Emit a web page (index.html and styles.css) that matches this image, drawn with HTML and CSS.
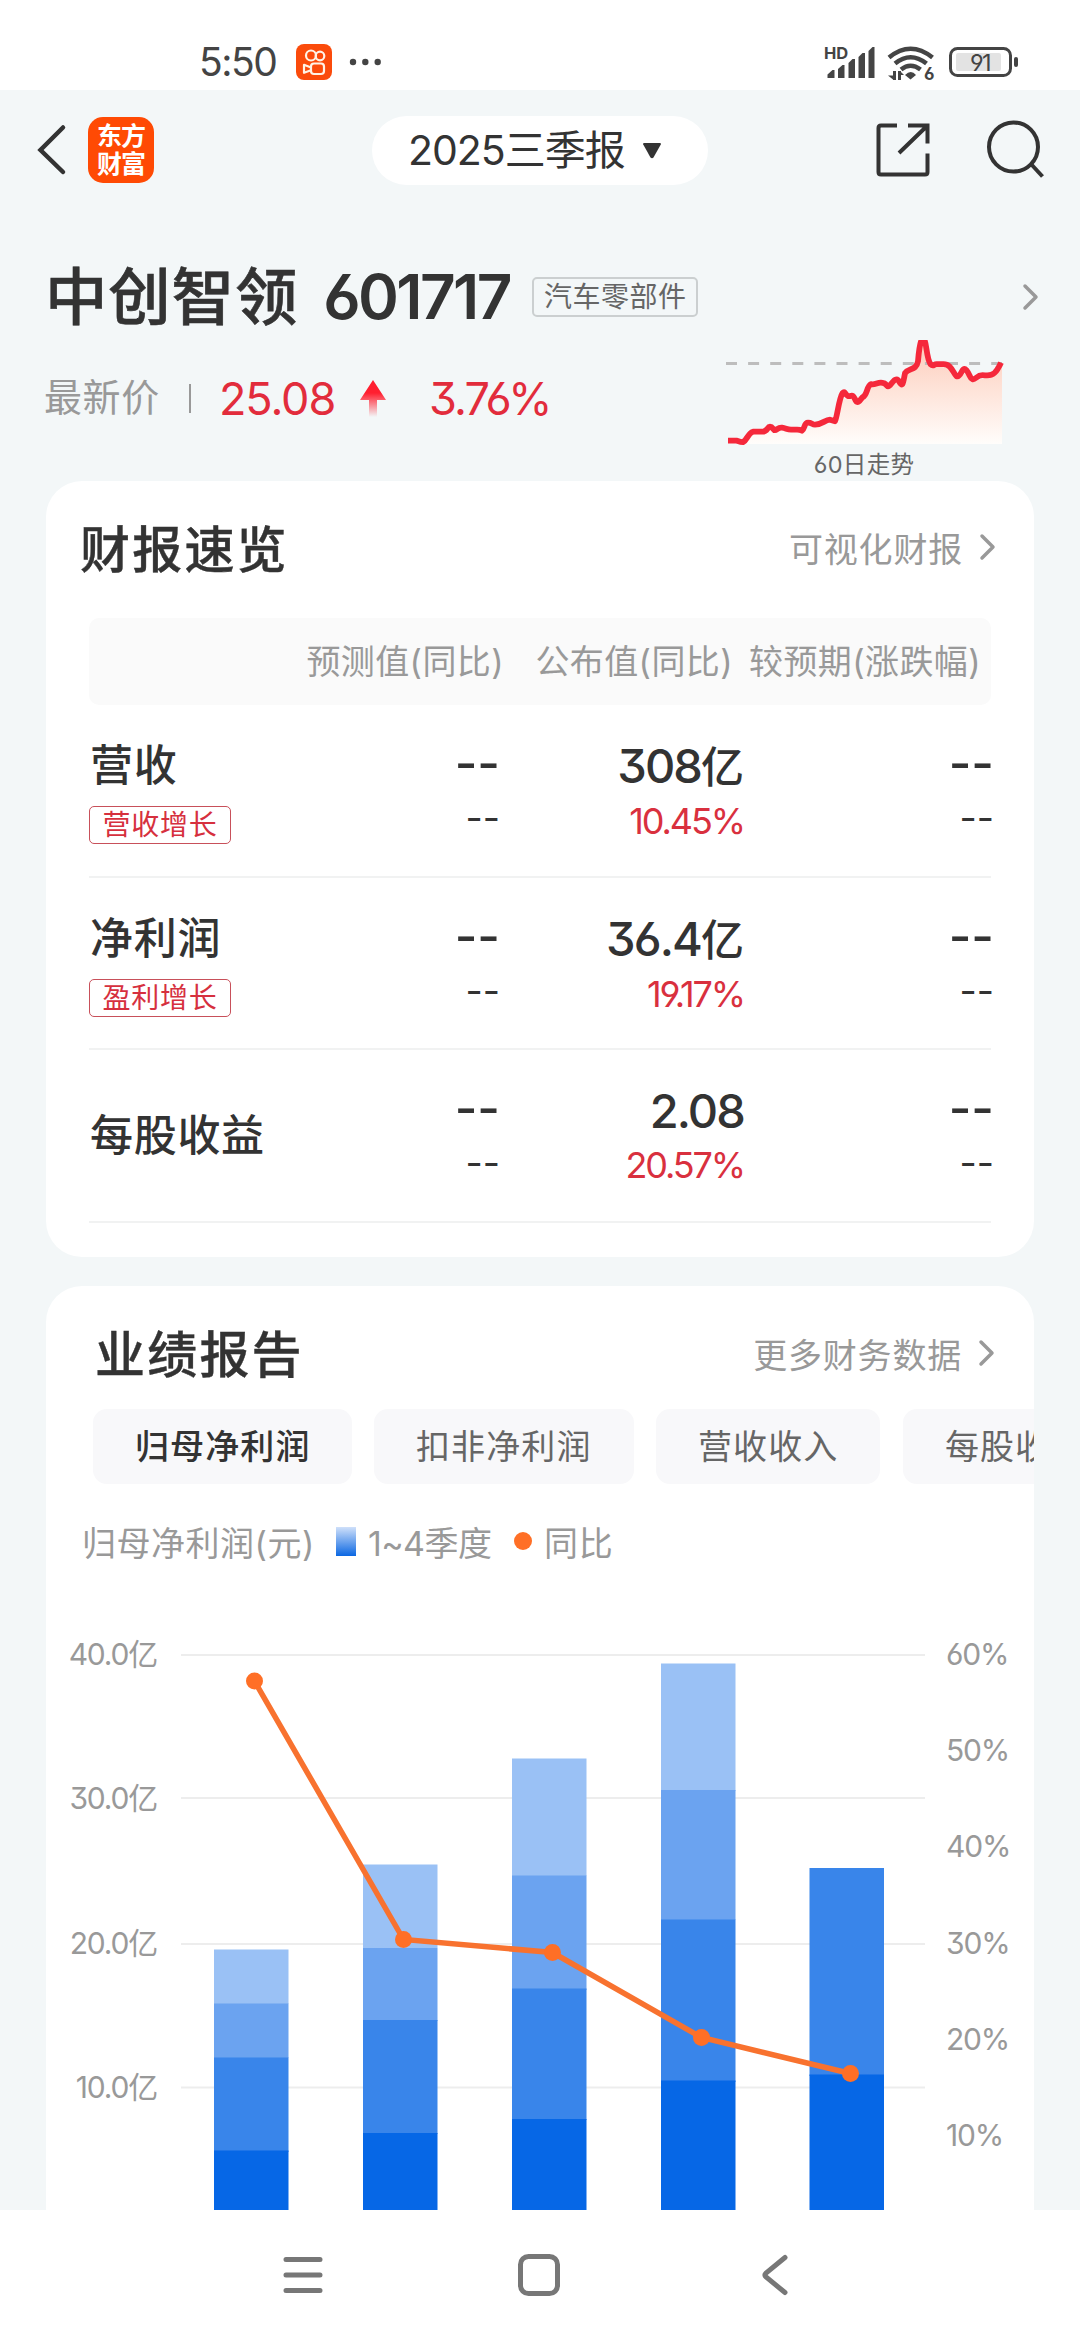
FILE: index.html
```html
<!DOCTYPE html>
<html lang="zh-CN">
<head>
<meta charset="utf-8">
<title>中创智领 601717</title>
<link rel="stylesheet" href="styles.css">
</head>
<body>
<div class="phone">
  <header class="status">
    <div class="status-left">
      <span class="clock">5:50</span>
      <svg class="app-badge" width="36" height="36" viewBox="0 0 36 36">
        <rect width="36" height="36" rx="8" fill="#fb4b0b"/>
        <g fill="none" stroke="#fff3e6" stroke-width="2.2">
          <circle cx="15" cy="11.5" r="5"/><circle cx="24" cy="12" r="4.3"/>
          <rect x="15" y="19.5" width="13" height="10.5" rx="3"/><path d="M15 23.5L8 20.8v8l7-2.6" stroke-linejoin="round"/>
        </g>
      </svg>
      <svg width="32" height="8" viewBox="0 0 32 8" fill="#444"><circle cx="4" cy="4" r="3.2"/><circle cx="16.3" cy="4" r="3.2"/><circle cx="28.7" cy="4" r="3.2"/></svg>
    </div>
    <svg class="status-right" width="196" height="40" viewBox="824 42 196 40">
      <text x="824" y="58.5" class="hd">HD</text>
      <g fill="#444">
        <path d="M827.5 78v-3.500l5-4.500h2v8z"/><path d="M838 78v-9l4.500-4h2v13z"/><path d="M848.500 78v-15l4-4h2.500v19z"/><path d="M858.500 78v-21l4-4h2.500v25z"/><path d="M868.500 78v-27l4-4h2v31z"/>
        <path d="M905 75q6-6 11 0l-5.500 4.500z"/>
        <path d="M888 75.500h5v4zM893 71h3v9h-3zM898 71h3v9h-3zM900 71l4 4h-4z"/>
        <rect x="1014" y="57" width="4" height="10" rx="2"/>
      </g>
      <g fill="none" stroke="#444" stroke-width="4.600">
        <path d="M889 57.500q21.500-17.500 43.500 0"/><path d="M895 63.500q15.500-12.500 31.500 0"/><path d="M901 69.500q9.500-7.500 19.500 0"/>
      </g>
      <text x="924" y="79.500" class="wifi-gen">6</text>
      <rect x="956" y="53" width="45" height="18" rx="2" fill="#e3e3e3"/>
      <rect x="950.500" y="48.500" width="60" height="27" rx="7" fill="none" stroke="#444" stroke-width="3"/>
      <text x="980" y="71" class="battery" text-anchor="middle">91</text>
    </svg>
  </header>

  <main class="app">
    <nav class="topbar">
      <svg width="30" height="52" viewBox="0 0 30 52" fill="none" stroke="#333" stroke-width="4.500" stroke-linecap="round"><path d="M26 3.500L3.500 26 26 48"/></svg>
      <div class="logo"><span>东方</span><span>财富</span></div>
      <div class="period"><span>2025三季报</span>
        <svg width="20" height="17" viewBox="0 0 20 17"><path d="M2 1h16q1.500 0 .8 1.500l-7.300 13q-1.500 1.500-3 0l-7.300-13Q.5 1 2 1z" fill="#333"/></svg>
      </div>
      <div class="actions">
        <svg width="54" height="54" viewBox="0 0 54 54" fill="none" stroke="#333" stroke-width="4"><path d="M21 2.500H5q-2.500 0-2.500 2.500v44q0 2.500 2.500 2.500h44q2.500 0 2.500-2.500V30.500M32 2.500h19.500v18M51 3L23 30"/></svg>
        <svg width="60" height="60" viewBox="0 0 60 60" fill="none" stroke="#333" stroke-width="4"><circle cx="27.500" cy="27" r="24.500"/><path d="M45 44l11.500 12.500"/></svg>
      </div>
    </nav>

    <section class="quote">
      <div class="quote-name">
        <h1>中创智领</h1><span class="code">601717</span><span class="sector">汽车零部件</span>
        <svg class="go" width="18" height="28" viewBox="0 0 18 28"><path d="M3 3l11 11L3 25"/></svg>
      </div>
      <div class="quote-row">
        <div class="price">
          <span class="price-label">最新价</span><i class="bar"></i><span class="up last">25.08</span>
          <svg class="arrow" width="26" height="37" viewBox="0 0 26 37"><defs><linearGradient id="a" x1="0" y1="0" x2="0" y2="1"><stop offset=".35" stop-color="#ff1f30"/><stop offset="1" stop-color="#ff1f30" stop-opacity="0"/></linearGradient></defs><path d="M13 0l13 20h-9v17H9V20H0z" fill="url(#a)"/></svg>
          <span class="up pct">3.76%</span>
        </div>
        <div class="trend">
          <svg width="284" height="106" viewBox="722 340 284 106">
            <defs><linearGradient id="t" x1="0" y1="0" x2="0" y2="1"><stop offset="0" stop-color="#fdcbb9"/><stop offset="1" stop-color="#fffdfb"/></linearGradient></defs>
            <path fill="url(#t)" d="M745 444L752 432 780 427 805 430 835 423 840 400 852 397 868 396 872 384 900 382 910 370 918 360 924 340 932 366 950 368 960 378 967 371 975 381 995 375 1002 363V444z"/>
            <path d="M726 363.500h276" stroke="#bdbdbd" stroke-width="3" stroke-dasharray="11 11.100"/>
            <path fill="none" stroke="#f5283b" stroke-width="5.800" stroke-linejoin="round" d="M728 440.700h9q4 1.500 6 1.500c4-2 5-9 10-10.500h9c6 0 5-5 8-5s3 3.500 5 3.500 3-3 7-2.500 5 2 9 2h6q3 0 5 1c3-2 2-8 6-8s4 2 7 2c7 0 10-5 15-5l5 1.500c2-3 4-23 7.500-28 3-3.500 3 3.500 7 3 4-1.500 4 0 6 4s4 1 7-3c5-2 4-11 8.500-13 5 1 7-3 13-1 4 2 3 5 6 2 4-5 7-8 9-4 4 7 4 2 6-8 4-6 11-2 13-12 1-12 2-18 3.500-21h3c2 3 2 18 6 24 3 3 3 0 6 0h7c8 0 9 8 13 12 5 2 5-11 10-6 4 5 3 8 6 9s4-4 10-4c5 0 10 2 15-6q2-3 3.500-6.500"/>
          </svg>
          <span class="trend-label">60日走势</span>
        </div>
      </div>
    </section>

    <section class="card overview">
      <div class="card-head">
        <h2>财报速览</h2>
        <div class="more"><span>可视化财报</span><svg class="go" width="18" height="28" viewBox="0 0 18 28"><path d="M3 3l11 11L3 25"/></svg></div>
      </div>
      <div class="cols"><span>预测值(同比)</span><span>公布值(同比)</span><span>较预期(涨跌幅)</span></div>
      <div class="row">
        <div class="metric"><b>营收</b><em>营收增长</em></div>
        <div class="val none"><b>--</b><span>--</span></div>
        <div class="val"><b class="num">308<i>亿</i></b><span class="red">10.45%</span></div>
        <div class="val none"><b>--</b><span>--</span></div>
      </div>
      <div class="row">
        <div class="metric"><b>净利润</b><em>盈利增长</em></div>
        <div class="val none"><b>--</b><span>--</span></div>
        <div class="val"><b class="num">36.4<i>亿</i></b><span class="red">19.17%</span></div>
        <div class="val none"><b>--</b><span>--</span></div>
      </div>
      <div class="row">
        <div class="metric single"><b>每股收益</b></div>
        <div class="val none"><b>--</b><span>--</span></div>
        <div class="val"><b class="num">2.08</b><span class="red">20.57%</span></div>
        <div class="val none"><b>--</b><span>--</span></div>
      </div>
    </section>

    <section class="card report">
      <div class="card-head">
        <h2>业绩报告</h2>
        <div class="more"><span>更多财务数据</span><svg class="go" width="18" height="28" viewBox="0 0 18 28"><path d="M3 3l11 11L3 25"/></svg></div>
      </div>
      <div class="tabs">
        <span class="tab active">归母净利润</span><span class="tab">扣非净利润</span><span class="tab">营收收入</span><span class="tab">每股收益</span>
      </div>
      <div class="legend">
        <span class="unit">归母净利润(元)</span><i class="swatch"></i><span class="quarters">1~4季度</span><i class="dot"></i><span>同比</span>
      </div>
      <svg class="chart" width="988" height="630" viewBox="46 1580 988 630">
        <g stroke="#ededed" stroke-width="2"><path d="M181 1655h744M181 1798h744M181 1944h744M181 2087.500h744"/></g>
        <g fill="#9ac1f5">
          <path d="M214 1949.500h74.500V2004H214zM363 1864.500h74.500V1948H363zM512 1758.500h74.500V1876H512zM661 1663.500h74.500V1791H661z"/>
        </g>
        <g fill="#6ba3f0">
          <path d="M214 2003.500h74.500V2058H214zM363 1948h74.500v73H363zM512 1875.500h74.500V1990H512zM661 1790h74.500v130H661z"/>
        </g>
        <g fill="#3985ea">
          <path d="M214 2057.500h74.500V2152H214zM363 2020h74.500v114H363zM512 1988.500h74.500V2120H512zM661 1919.500h74.500V2082H661zM809.500 1868H884v208h-74.500z"/>
        </g>
        <g fill="#0667e6">
          <path d="M214 2150.500h74.500V2210H214zM363 2133h74.500v77H363zM512 2119h74.500v91H512zM661 2080.500h74.500V2210H661zM809.500 2074.500H884V2210h-74.500z"/>
        </g>
        <polyline points="254.500,1681 403.500,1939.500 552.500,1952.500 701.500,2037.500 850.500,2073.500" fill="none" stroke="#f8722f" stroke-width="5.500"/>
        <g fill="#ff6f26"><circle cx="254.500" cy="1681" r="8.500"/><circle cx="403.500" cy="1939.500" r="8.500"/><circle cx="552.500" cy="1952.500" r="8.500"/><circle cx="701.500" cy="2037.500" r="8.500"/><circle cx="850.500" cy="2073.500" r="8.500"/></g>
        <g class="axis" text-anchor="end">
          <text x="157" y="1665">40.0亿</text><text x="157" y="1809">30.0亿</text><text x="157" y="1953.500">20.0亿</text><text x="157" y="2097.500">10.0亿</text>
        </g>
        <g class="axis">
          <text x="946" y="1665">60%</text><text x="946" y="1761">50%</text><text x="946" y="1857">40%</text><text x="946" y="1953.500">30%</text><text x="946" y="2049.500">20%</text><text x="946" y="2145.500">10%</text>
        </g>
      </svg>
    </section>
  </main>

  <footer class="sysnav">
    <svg width="40" height="42" viewBox="0 0 40 42" stroke="#777" stroke-width="5" stroke-linecap="round"><path d="M3 5.500h34M3 21h34M3 36.500h34"/></svg>
    <svg class="home" width="42" height="42" viewBox="0 0 42 42" fill="none" stroke="#777" stroke-width="5"><rect x="2.500" y="2.500" width="37" height="37" rx="8"/></svg>
    <svg width="28" height="42" viewBox="0 0 28 42" fill="none" stroke="#777" stroke-width="5" stroke-linecap="round"><path d="M24 3.500L5 19q-2 2 0 4l19 15.500"/></svg>
  </footer>
</div>
</body>
</html>
```
FILE: styles.css
```css
* { box-sizing: border-box; }
body { margin: 0; background: #fff; }
h1, h2 { margin: 0; }
b, em, i { font-style: normal; }
svg { display: block; flex: none; }
.phone {
  width: 1080px; height: 2340px; display: flex; flex-direction: column; overflow: hidden;
  font-family: Inter, "Noto Sans CJK SC", sans-serif;
  font-feature-settings: "cv03", "cv04", "cv09";
  color: #333; white-space: nowrap;
}

/* system status bar */
.status { height: 90px; flex: none; display: flex; justify-content: space-between; padding: 42px 60px 0 199px; }
.status-left { display: flex; height: 40px; align-items: center; }
.clock { font-size: 39px; line-height: 40px; letter-spacing: -1.5px; color: #444; width: 97px; }
.app-badge { margin-right: 17px; }
.hd { font-size: 16.500px; font-weight: 700; fill: #444; }
.wifi-gen { font-size: 17px; font-weight: 700; fill: #444; }
.battery { font-size: 23.500px; fill: #444; letter-spacing: -1.5px; }

.app { height: 2120px; flex: none; background: #f3f7f8; overflow: hidden; }

/* title bar */
.topbar { height: 120px; display: flex; align-items: center; padding: 0 34px 0 37px; }
.logo {
  width: 66px; height: 66px; margin-left: 21px; border-radius: 15px; background: #ff4a04; color: #fff;
  display: flex; flex-direction: column; align-items: center; justify-content: center;
  font-size: 25px; line-height: 28px; font-weight: 700; letter-spacing: -1px;
}
.period {
  width: 336px; height: 69px; margin-left: 218px; border-radius: 35px; background: #fff;
  display: flex; align-items: center; padding-left: 36px; gap: 17px;
  font-size: 41px; letter-spacing: -1px; line-height: 71px;
}
.actions { margin-left: auto; display: flex; align-items: center; gap: 56px; }

/* quote */
.quote { height: 271px; padding-top: 34px; }
.go path { fill: none; stroke: #999; stroke-width: 3.500; stroke-linecap: round; stroke-linejoin: round; }
.quote-name { height: 99px; padding: 7px 40px 0 45px; display: flex; align-items: center; }
.quote-name h1 { font-size: 62.500px; font-weight: 500; line-height: 80px; letter-spacing: .8px; -webkit-text-stroke: .6px #333; }
.code { font-size: 62px; font-weight: 600; line-height: 80px; letter-spacing: -2.6px; margin-left: 25px; width: 209px; }
.sector { width: 166px; height: 40px; border: 2px solid #cbcfd0; border-radius: 5px; color: #666; font-size: 28px; line-height: 36px; text-align: center; letter-spacing: .5px; }
.quote-name .go { margin-left: auto; }
.quote-row { display: flex; justify-content: space-between; padding: 0 74px 0 44px; }
.price { display: flex; align-items: center; height: 60px; margin-top: 25px; }
.price-label { font-size: 38px; line-height: 50px; color: #999; letter-spacing: .6px; width: 145px; margin-bottom: 3px; }
.bar { width: 2px; height: 29px; background: #999; }
.up { color: #e22c3c; font-size: 45px; letter-spacing: -1.1px; }
.last { margin-left: 28px; width: 141px; }
.pct { margin-left: 43px; letter-spacing: -1.8px; }
.trend { display: flex; flex-direction: column; align-items: center; margin-top: -3px; width: 284px; }
.trend-label { font-size: 23.500px; line-height: 34px; color: #666; margin-top: 2px; letter-spacing: .3px; }

/* cards */
.card { margin: 0 46px; background: #fff; border-radius: 36px; overflow: hidden; }
.card-head { display: flex; justify-content: space-between; align-items: center; padding: 0 37px 2px 34px; height: 134px; }
.card-head h2 { font-size: 50px; font-weight: 500; letter-spacing: 2.2px; position: relative; top: -1px; -webkit-text-stroke: .4px #333; }
.more { display: flex; align-items: center; gap: 16px; color: #999; font-size: 34px; letter-spacing: .8px; }
.overview { height: 776px; }
.cols {
  margin: 3px 43px 0; height: 87px; border-radius: 10px; background: #fafafa; padding-right: 10px;
  display: grid; grid-template-columns: 415px 229px 248px; text-align: right;
  color: #999; font-size: 34px; line-height: 87px; letter-spacing: .4px;
}
.row { margin: 0 43px; height: 172.500px; border-bottom: 2px solid #f1f2f2; display: grid; grid-template-columns: 250px 158px 246px 248px; }
.metric { padding-top: 36px; }
.metric b { display: block; font-size: 43px; font-weight: 500; line-height: 48px; letter-spacing: .7px; padding-left: 1px; }
.metric em { display: block; width: 142px; height: 38px; margin-top: 17px; border: 1.500px solid #c8505a; border-radius: 5px; color: #d6303e; font-size: 28px; line-height: 36px; text-align: center; letter-spacing: .8px; }
.single { padding-top: 61px; }
.val { text-align: right; padding-top: 37px; }
.val b { display: block; font-size: 43px; font-weight: 500; line-height: 48px; }
.val span { display: block; font-size: 36px; line-height: 50px; margin-top: 5px; }
.val.none { margin-right: -3px; padding-top: 35px; }
.val.none b { font-size: 49px; }
.val.none span { font-size: 37.500px; }
.val .num { font-size: 47px; letter-spacing: -1.9px; margin-right: -1px; }
.val .num i { font-size: 43px; letter-spacing: 0; }
.val .red { color: #d9303e; letter-spacing: -2.1px; margin-right: -1px; }

.report { margin-top: 29px; height: 990px; }
.report .card-head { padding: 11px 38px 0 49px; height: 123px; }
.report .card-head h2 { top: -2px; }
.tabs { display: flex; gap: 22.500px; padding-left: 47px; }
.tab { flex: none; height: 75px; padding: 0 41px 0 42px; border-radius: 14px; background: #f8f8fa; color: #666; font-size: 34px; line-height: 75px; letter-spacing: 1.1px; }
.tab + .tab { padding-right: 42px; }
.tab.active { color: #333; font-weight: 500; }
.legend { display: flex; align-items: center; height: 96px; padding: 18px 0 0 36px; color: #999; font-size: 34px; letter-spacing: .8px; }
.unit { width: 254px; letter-spacing: .5px; }
.swatch { width: 20px; height: 29px; background: linear-gradient(#cfe0fa, #0b67e2); }
.quarters { margin-left: 12px; width: 146px; letter-spacing: -.6px; }
.dot { width: 18px; height: 18px; border-radius: 9px; background: #ff6f26; margin-right: 12px; }
.axis { font-size: 30px; letter-spacing: -1.2px; fill: #999; }

/* system navigation */
.sysnav { height: 130px; flex: none; display: flex; align-items: center; padding: 0 291px 0 283px; justify-content: space-between; background: #fff; }
.home { margin-right: 6px; }
```
